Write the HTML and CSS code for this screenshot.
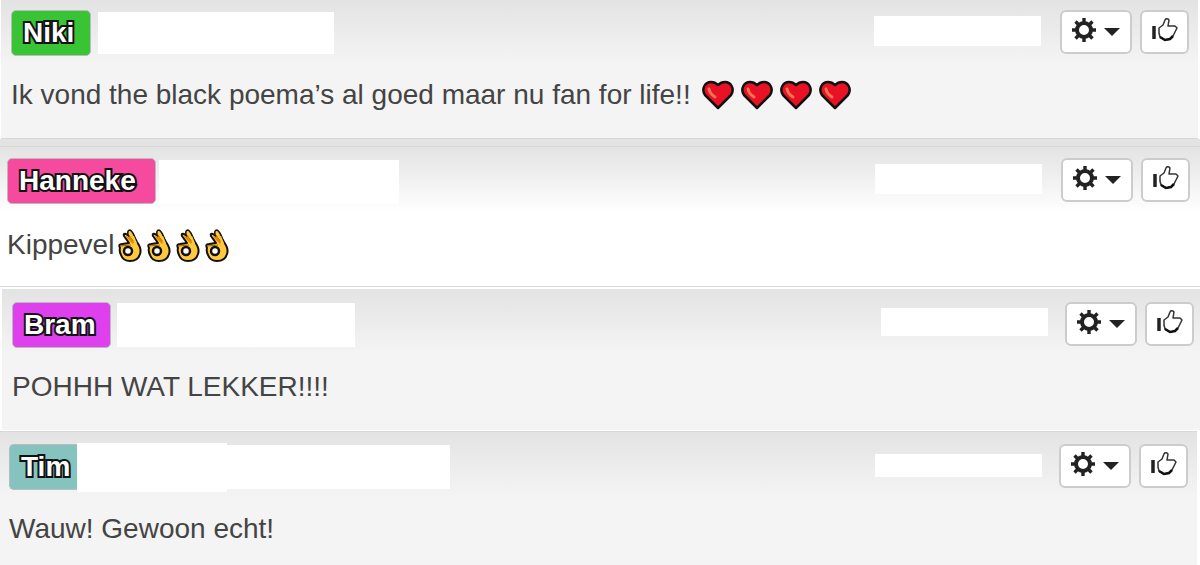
FILE: index.html
```
<!DOCTYPE html>
<html lang="nl">
<head>
    <meta charset="UTF-8">
    <meta name="viewport" content="width=device-width, initial-scale=1.0">
    <title>Reacties</title>
    <link rel="stylesheet" href="styles.css">
</head>
<body>

    <!-- Iconen die in elke reactie terugkomen -->
    <svg class="sprite" aria-hidden="true">
        <symbol id="gear" viewBox="0 0 24 24">
            <circle cx="12" cy="12" r="7" fill="none" stroke="#222" stroke-width="4"/>
            <path d="M12 0v4M12 20v4M0 12h4M20 12h4M3.5 3.5l3 3M17.5 17.5l3 3M3.5 20.5l3-3M17.5 6.5l3-3" stroke="#222" stroke-width="3.4"/>
        </symbol>
        <symbol id="thumb" viewBox="0 0 26 26">
            <path d="M2 9v13" stroke="#222" stroke-width="3.5"/>
            <path d="M7 11l4-3 2-5q1-2 3-1l1 1-1 6h7l2 2-4 8-3 3-5 1-5-3-1-4z" fill="#fff" stroke="#333" stroke-width="1.5" stroke-linejoin="round"/>
            <path d="M8 20l5 3 5-1 3-3" fill="none" stroke="#111" stroke-width="2.5"/>
        </symbol>
        <symbol id="heart" viewBox="0 0 32 30">
            <path d="M16 28L3 15C-1 9 3 2 9 2q4 0 7 3q3-3 7-3c6 0 10 7 6 13z" fill="#e81224" stroke="#111" stroke-width="2.5" stroke-linejoin="round"/>
            <path d="M7 9q1 5 6 8" fill="none" stroke="#f4734f" stroke-width="3" stroke-linecap="round"/>
        </symbol>
        <symbol id="ok-hand" viewBox="0 0 24 34">
            <path d="M2 20q-2-4 2-4l7-1L6 8q-1-3 2-2l3 2V5q1-2 3 0l5 9q5 7 3 12-2 7-10 7-7 0-9-6-2-4-1-7z" fill="#ffc83d" stroke="#111" stroke-width="2" stroke-linejoin="round"/>
            <path d="M10 7q-1-5 2-5 3 1 6 11l-4-1z" fill="#ffc83d" stroke="#111" stroke-width="1.5" stroke-linejoin="round"/>
            <path d="M7 8l8 8 1-2-4-6-2 1z" fill="#e08a00"/>
            <path d="M13 9l5 8 1-2-3-7z" fill="#ffc83d"/>
            <path d="M2 18l11-1" stroke="#a86400" stroke-width="1"/>
            <circle cx="10" cy="23" r="4" fill="#fff" stroke="#111" stroke-width="2.5"/>
        </symbol>
    </svg>

    <main class="comments">
        <article class="comment comment-niki">
            <header class="comment-header">
                <span class="name">Niki</span>
                <span class="blank blank-user"></span>
                <span class="blank blank-date"></span>
                <button class="btn btn-menu" aria-label="Opties"><svg class="icon-gear"><use href="#gear"/></svg><span class="caret"></span></button>
                <button class="btn btn-like" aria-label="Vind ik leuk"><svg class="icon-thumb"><use href="#thumb"/></svg></button>
            </header>
            <p class="message">Ik vond the black poema’s al goed maar nu fan for life!!<span class="hearts"><svg><use href="#heart"/></svg><svg><use href="#heart"/></svg><svg><use href="#heart"/></svg><svg><use href="#heart"/></svg></span></p>
        </article>

        <article class="comment comment-hanneke">
            <header class="comment-header">
                <span class="name">Hanneke</span>
                <span class="blank blank-user"></span>
                <span class="blank blank-date"></span>
                <button class="btn btn-menu" aria-label="Opties"><svg class="icon-gear"><use href="#gear"/></svg><span class="caret"></span></button>
                <button class="btn btn-like" aria-label="Vind ik leuk"><svg class="icon-thumb"><use href="#thumb"/></svg></button>
            </header>
            <p class="message">Kippevel<span class="hands"><svg><use href="#ok-hand"/></svg><svg><use href="#ok-hand"/></svg><svg><use href="#ok-hand"/></svg><svg><use href="#ok-hand"/></svg></span></p>
        </article>

        <article class="comment comment-bram">
            <header class="comment-header">
                <span class="name">Bram</span>
                <span class="blank blank-user"></span>
                <span class="blank blank-date"></span>
                <button class="btn btn-menu" aria-label="Opties"><svg class="icon-gear"><use href="#gear"/></svg><span class="caret"></span></button>
                <button class="btn btn-like" aria-label="Vind ik leuk"><svg class="icon-thumb"><use href="#thumb"/></svg></button>
            </header>
            <p class="message">POHHH WAT LEKKER!!!!</p>
        </article>

        <article class="comment comment-tim">
            <header class="comment-header">
                <span class="name">Tim</span>
                <span class="blank blank-tag"></span>
                <span class="blank blank-user"></span>
                <span class="blank blank-date"></span>
                <button class="btn btn-menu" aria-label="Opties"><svg class="icon-gear"><use href="#gear"/></svg><span class="caret"></span></button>
                <button class="btn btn-like" aria-label="Vind ik leuk"><svg class="icon-thumb"><use href="#thumb"/></svg></button>
            </header>
            <p class="message">Wauw! Gewoon echt!</p>
        </article>
    </main>

</body>
</html>
```
FILE: styles.css
```
* { box-sizing: border-box; }

body {
    margin: 0;
    background: #fff;
    color: #444;
    font-family: "Liberation Sans", Arial, sans-serif;
}

.sprite { position: absolute; width: 0; height: 0; }

.comments { overflow: hidden; }

/* Elke reactie heeft bovenaan een grijs verloop */
.comment {
    background: linear-gradient(#e3e3e3, #f4f4f4 64px);
}

.comment-header {
    display: flex;
    align-items: flex-start;
    height: 46px;
}

/* Naamlabel */
.name {
    height: 46px;
    padding: 0 11px;
    border: 1px solid #bbb;
    border-radius: 5px;
    color: #fff;
    font-size: 28px;
    font-weight: bold;
    line-height: 44px;
    -webkit-text-stroke: 4px #111;
    paint-order: stroke fill;
}

/* Witte vlakken achter naam en datum */
.blank { background: #fff; height: 44px; }
.blank-date { width: 167px; height: 30px; margin: 6px 19px 0 auto; }

/* Knoppen */
.btn {
    display: flex;
    align-items: center;
    justify-content: center;
    height: 44px;
    padding: 0;
    border: 2px solid #ccc;
    border-radius: 6px;
    background: #fff;
}
.btn-menu { width: 72px; gap: 8px; margin-right: 8px; }
.btn-like { width: 49px; }

.icon-gear { width: 24px; height: 24px; margin-bottom: 4px; }
.icon-thumb { width: 26px; height: 26px; margin-bottom: 4px; }

.caret {
    border: 8px solid transparent;
    border-top-color: #222;
    border-bottom: 0;
}

/* Tekst van de reactie */
.message {
    display: flex;
    align-items: center;
    margin: 0;
    font-size: 28px;
    line-height: 34px;
}

.hearts, .hands { display: flex; }
.hearts { gap: 7px; margin-left: 11px; }
.hearts svg { width: 32px; height: 30px; }
.hands { gap: 5px; margin-left: 4px; }
.hands svg { width: 24px; height: 34px; }

/* Niki */
.comment-niki {
    margin: 0 2px 0 1px;
    padding: 10px 9px 26px 10px;
    border-bottom: 1px solid #d8d8d8;
}
.comment-niki .name { width: 80px; background: #39c435; }
.comment-niki .blank-user { width: 236px; height: 42px; margin: 2px 0 0 7px; }
.comment-niki .message { margin-top: 22px; }

/* Hanneke */
.comment-hanneke {
    padding: 19px 10px 24px 7px;
    border-bottom: 1px solid #d8d8d8;
    background: linear-gradient(#e3e3e3 7px, #d8d8d8 7px, #d8d8d8 8px, #e3e3e3 8px, #fff 74px);
}
.comment-hanneke .name { width: 149px; background: #f64a9f; }
.comment-hanneke .blank-user { width: 240px; margin: 2px 0 0 3px; }
.comment-hanneke .message { margin-top: 24px; }

/* Bram */
.comment-bram {
    margin: 2px 0 0 2px;
    padding: 13px 6px 26px 10px;
}
.comment-bram .name { width: 99px; background: #df40ee; }
.comment-bram .blank-user { width: 238px; margin: 1px 0 0 6px; }
.comment-bram .blank-date { height: 28px; margin-right: 17px; }
.comment-bram .message { margin-top: 22px; }

/* Tim */
.comment-tim {
    margin: 1px 3px 0 0;
    padding: 12px 9px 19px 9px;
    border-top: 1px solid #d8d8d8;
}
.comment-tim .name { width: 68px; background: #85c3be; border-right: 0; border-radius: 5px 0 0 5px; }
.comment-tim .blank-tag { width: 150px; height: 49px; margin-top: -1px; }
.comment-tim .blank-user { width: 223px; margin-top: 1px; }
.comment-tim .blank-date { height: 23px; margin: 10px 17px 0 auto; }
.comment-tim .message { margin-top: 22px; }
```
